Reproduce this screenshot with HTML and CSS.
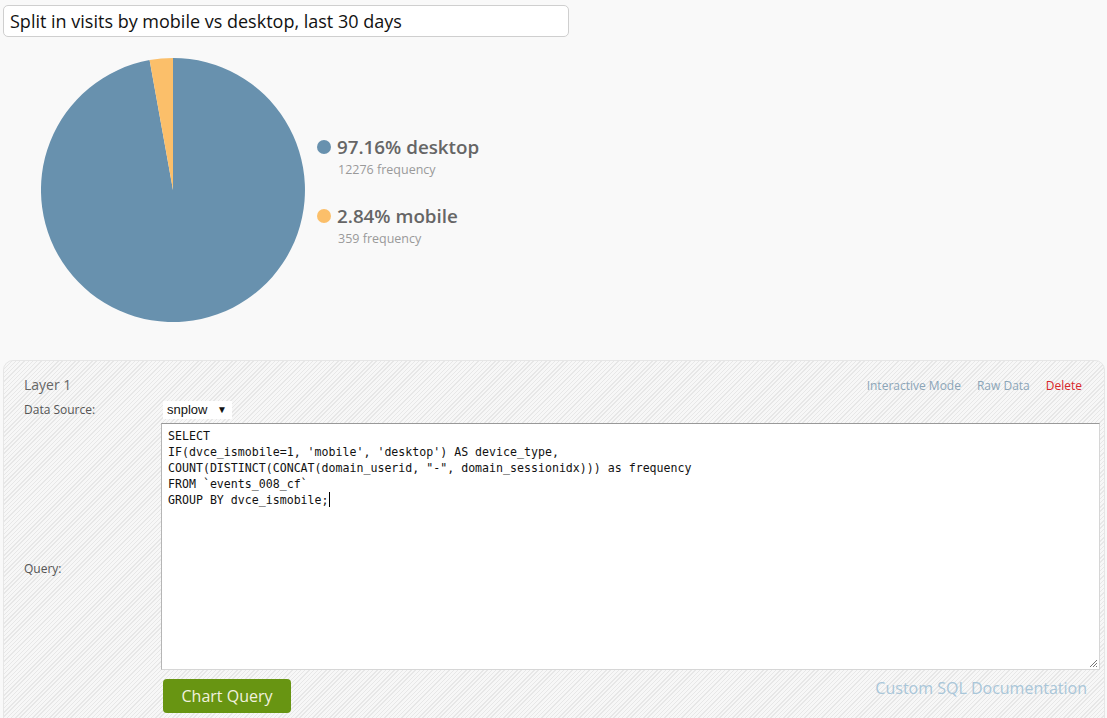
FILE: index.html
```html
<!DOCTYPE html>
<html>
<head>
<meta charset="utf-8">
<link rel="stylesheet" href="styles.css">
</head>
<body>
<div class="title-wrap">
  <div class="title-input">Split in visits by mobile vs desktop, last 30 days</div>
</div>
<div class="chart">
  <svg class="pie" width="264" height="264" viewBox="0 0 264 264">
    <path d="M132,132 L132,0 A132,132 0 1 1 108.58,2.09 Z" fill="#6891ae"/>
    <path d="M132,132 L108.58,2.09 A132,132 0 0 1 132,0 Z" fill="#fbbf6a"/>
  </svg>
  <div class="legend">
    <div class="item">
      <div class="item-title"><span class="dot dot-desktop"></span>97.16% desktop</div>
      <div class="item-sub">12276 frequency</div>
    </div>
    <div class="item">
      <div class="item-title"><span class="dot dot-mobile"></span>2.84% mobile</div>
      <div class="item-sub">359 frequency</div>
    </div>
  </div>
</div>
<div class="panel">
  <div class="panel-head">
    <div class="layer-name">Layer 1</div>
    <div class="links">
      <a class="link">Interactive Mode</a>
      <a class="link">Raw Data</a>
      <a class="link link-delete">Delete</a>
    </div>
  </div>
  <div class="form">
    <div class="label label-ds">Data Source:</div>
    <div class="ds-cell"><span class="select">snplow <span class="arrow">▼</span></span></div>
    <div class="label label-query">Query:</div>
    <div class="query-cell">
      <div class="textarea">SELECT
IF(dvce_ismobile=1, 'mobile', 'desktop') AS device_type,
COUNT(DISTINCT(CONCAT(domain_userid, "-", domain_sessionidx))) as frequency
FROM `events_008_cf`
GROUP BY dvce_ismobile;<span class="caret"></span></div>
      <svg class="grip" width="10" height="10" viewBox="0 0 10 10"><path d="M9,2 L2,9 M9,5 L5,9 M9,8 L8,9" stroke="#777" stroke-width="1"/></svg>
    </div>
    <div></div>
    <div class="actions">
      <button class="btn">Chart Query</button>
      <a class="doc-link">Custom SQL Documentation</a>
    </div>
  </div>
</div>
</body>
</html>
```
FILE: styles.css
```css
html, body {
  margin: 0;
  padding: 0;
  background: #f9f9f9;
  font-family: "Open Sans", "DejaVu Sans", sans-serif;
  overflow: hidden;
  height: 718px;
}
.title-wrap {
  padding: 5px 0 0 3px;
}
.title-input {
  width: 558px;
  height: 30px;
  border: 1px solid #cfcfcf;
  border-radius: 5px;
  background: #fff;
  font-size: 18px;
  line-height: 30px;
  color: #111;
  padding-left: 6px;
}
.chart {
  display: flex;
  align-items: center;
  margin-top: 21px;
  padding-left: 41px;
}
.pie {
  display: block;
}
.legend {
  margin-left: 12px;
  margin-top: 3px;
}
.item {
  margin-bottom: 23px;
}
.item:last-child {
  margin-bottom: 0;
}
.item-title {
  display: flex;
  align-items: center;
  font-size: 18.8px;
  font-weight: 600;
  color: #666;
  line-height: 26px;
}
.dot {
  width: 14px;
  height: 14px;
  border-radius: 50%;
  margin-right: 6px;
}
.dot-desktop { background: #6891ae; }
.dot-mobile { background: #fbbf6a; }
.item-sub {
  font-size: 12.5px;
  color: #9a9a9a;
  line-height: 20px;
  padding-left: 21px;
}
.panel {
  margin: 38px 2px 0 3px;
  height: 400px;
  border: 1px solid #e6e6e6;
  border-radius: 10px;
  background: repeating-linear-gradient(135deg, #f7f7f7 0 2px, #e7e7e7 2px 3px);
  padding: 13px 4px 0 20px;
}
.panel-head {
  display: flex;
  justify-content: space-between;
  align-items: center;
  height: 20px;
}
.layer-name {
  font-size: 14px;
  color: #666;
}
.links {
  display: flex;
  gap: 16px;
  margin-right: 18px;
  font-size: 12px;
  padding-top: 2px;
}
.link { color: #8ba5b8; }
.link-delete { color: #d9262b; }
.form {
  display: grid;
  grid-template-columns: 137px 1fr;
  margin-top: 5px;
}
.label {
  font-size: 12px;
  color: #555;
}
.label-ds {
  line-height: 22px;
}
.ds-cell {
  display: flex;
  align-items: center;
  height: 22px;
}
.select {
  display: inline-block;
  background: #fff;
  font-family: "Liberation Sans", Arial, sans-serif;
  font-size: 13px;
  color: #111;
  height: 18px;
  line-height: 18px;
  padding: 0 5px 0 4px;
  margin-left: 2px;
}
.arrow {
  font-size: 10px;
  margin-left: 6px;
  position: relative;
  top: -1px;
}
.label-query {
  padding-top: 139px;
}
.query-cell {
  position: relative;
  margin-top: 2px;
}
.textarea {
  height: 236px;
  background: #fff;
  border: 1px solid #d6d6d6;
  border-top-color: #999;
  border-left-color: #b5b5b5;
  padding: 4px 6px 5px 6px;
  font-family: "DejaVu Sans Mono", monospace;
  font-size: 11.6px;
  line-height: 16px;
  color: #111;
  white-space: pre;
}
.caret {
  display: inline-block;
  width: 1px;
  height: 15px;
  background: #000;
  vertical-align: -3px;
}
.grip {
  position: absolute;
  right: 2px;
  bottom: 2px;
}
.actions {
  display: flex;
  justify-content: space-between;
  align-items: flex-start;
  margin-top: 9px;
}
.btn {
  margin-left: 2px;
  width: 128px;
  height: 34px;
  background: #689512;
  border: none;
  border-radius: 4px;
  color: #f1f1df;
  font-family: "Open Sans", sans-serif;
  font-size: 16px;
  padding: 0;
}
.doc-link {
  font-size: 16px;
  line-height: 22px;
  color: #a9c6d9;
  margin-right: 13px;
  margin-top: -2px;
}
```
